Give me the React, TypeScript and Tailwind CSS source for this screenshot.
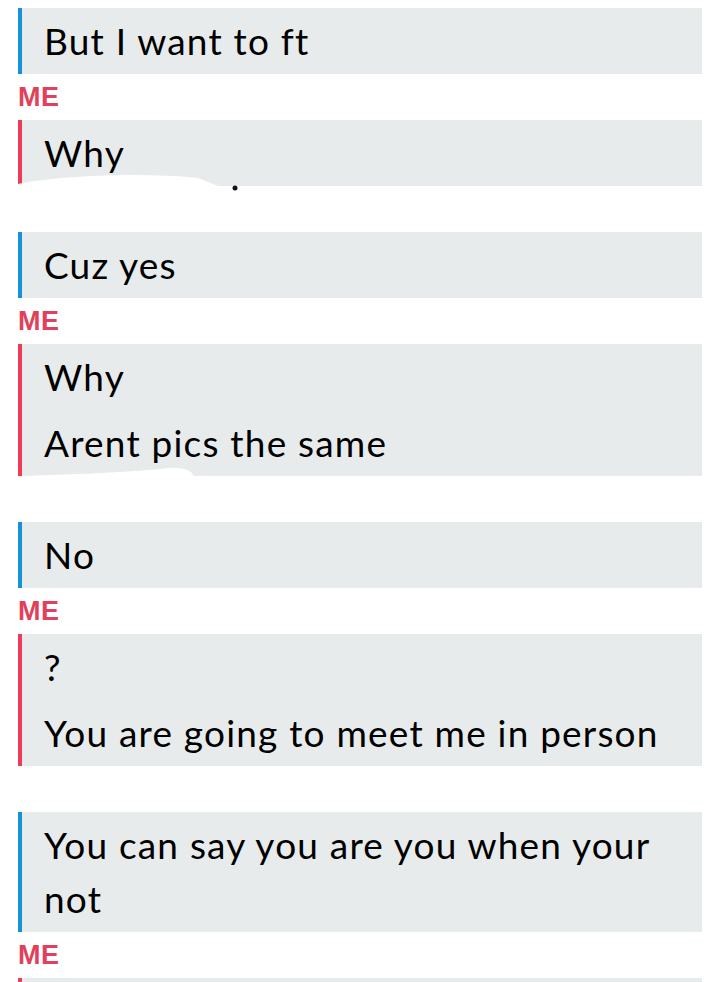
// App.tsx

type Block = {
  from: "them" | "me";
  lines: string[];
  cover?: "why" | "arent";
};

const blocks: Block[] = [
  { from: "them", lines: ["But I want to ft"] },
  { from: "me", lines: ["Why"], cover: "why" },
  { from: "them", lines: ["Cuz yes"] },
  { from: "me", lines: ["Why", "Arent pics the same"], cover: "arent" },
  { from: "them", lines: ["No"] },
  { from: "me", lines: ["?", "You are going to meet me in person"] },
  { from: "them", lines: ["You can say you are you when your not"] },
  { from: "me", lines: [""] },
];

export default function App() {
  return (
    <div
      className="w-[719px] h-[982px] overflow-hidden bg-white pt-[8px] text-black"
      style={{ fontFamily: "Lato, 'Noto Sans', sans-serif" }}
    >
      {blocks.map((b, i) => {
        const isMe = b.from === "me";
        return (
          <div key={i}>
            {/* sender label: name of the other person was scribbled out */}
            {i > 0 && (
              <div className="h-[46px] pl-[18px] flex items-center">
                {isMe && (
                  <span
                    className="text-[27px] font-bold leading-none text-[#e23f5b] tracking-[0.5px]"
                    style={{ fontFamily: "'Liberation Sans', sans-serif" }}
                  >
                    ME
                  </span>
                )}
              </div>
            )}
            <div className="relative ml-[18px] mr-[17px] flex">
              <div className={isMe ? "w-[4px] bg-[#ef3b58]" : "w-[4px] bg-[#1592dc]"} />
              <div className="flex-1 bg-[#e8ebec]">
                {b.lines.map((l, j) => (
                  <div
                    key={j}
                    className="pl-[22px] pr-[10px] py-[6px] text-[37px] leading-[54px] min-h-[66px] tracking-[1.2px]"
                  >
                    {l}
                  </div>
                ))}
              </div>
              {b.cover === "why" && (
                <svg className="absolute left-[0px] top-[52px]" width="240" height="20" viewBox="0 0 240 20">
                  <path d="M0 20 L0 12 C40 4 120 0 180 6 L200 14 L240 14 L240 20 Z" fill="#fff" />
                  <circle cx="217" cy="16" r="2.5" fill="#111" />
                </svg>
              )}
              {b.cover === "arent" && (
                <svg className="absolute left-[0px] top-[124px]" width="200" height="10" viewBox="0 0 200 10">
                  <path d="M0 10 L10 8 C60 6 120 4 150 0 C170 -1 175 4 176 10 Z" fill="#fff" />
                </svg>
              )}
            </div>
          </div>
        );
      })}
    </div>
  );
}
